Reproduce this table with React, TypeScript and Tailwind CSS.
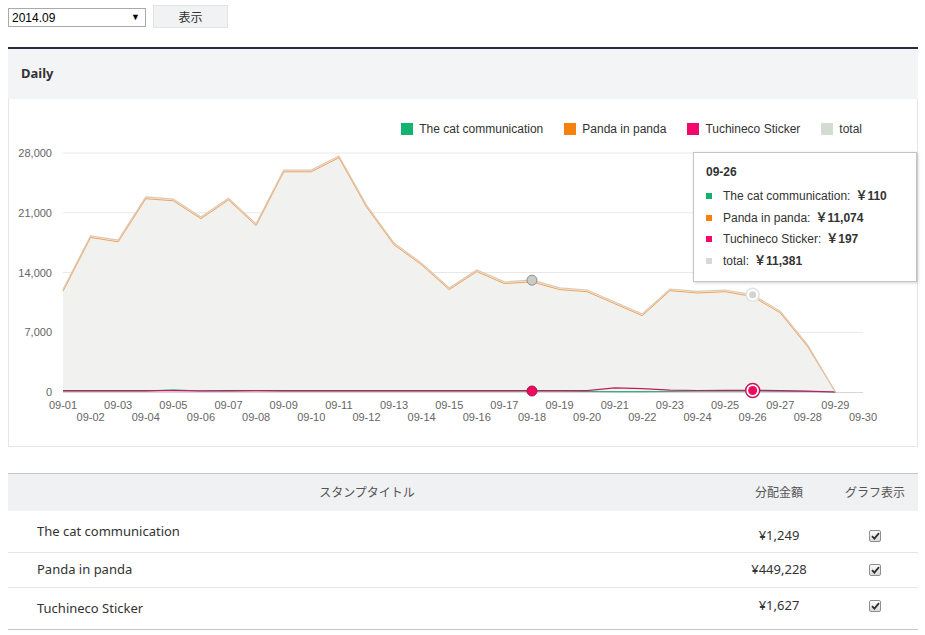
import React from "react";

const total = [
  12000, 18300, 17800, 22850, 22600, 20500, 22700, 19700, 26000, 26000, 27650, 21900, 17450, 15100, 12200,
  14300, 12900, 13100, 12200, 11950, 10540, 9140, 12070, 11800, 11950, 11381, 9480, 5500, 0,
];
const pink = [
  150, 150, 160, 150, 150, 140, 150, 150, 150, 150, 150, 160, 150, 150, 150, 150, 150, 150, 150, 160, 480, 400,
  220, 180, 200, 197, 150, 100, 0,
];
const green = [
  100, 100, 100, 100, 260, 120, 100, 150, 110, 100, 100, 100, 100, 100, 100, 100, 100, 100, 100, 60, 40, 40, 60,
  100, 100, 110, 100, 60, 0,
];
const panda = total.map((v, i) => (i === total.length - 1 ? 0 : Math.max(0, v - 200)));

const X0 = 63;
const STEP = 800 / 29;
const Y0 = 393;
const sx = (i: number) => X0 + i * STEP;
const sy = (v: number) => Y0 - (v * 239) / 28000;
const line = (d: number[]) => d.map((v, i) => `${i ? "L" : "M"}${sx(i).toFixed(1)},${sy(v).toFixed(1)}`).join(" ");

const yTicks = [0, 7000, 14000, 21000, 28000];
const days = Array.from({ length: 30 }, (_, i) => `09-${String(i + 1).padStart(2, "0")}`);

const legend = [
  { label: "The cat communication", color: "bg-[#13b26f]" },
  { label: "Panda in panda", color: "bg-[#f7810f]" },
  { label: "Tuchineco Sticker", color: "bg-[#f2086a]" },
  { label: "total", color: "bg-[#d2dcd2]" },
];

const tips = [
  { label: "The cat communication:", value: "￥110", color: "bg-[#13b26f]" },
  { label: "Panda in panda:", value: "￥11,074", color: "bg-[#f7810f]" },
  { label: "Tuchineco Sticker:", value: "￥197", color: "bg-[#f2086a]" },
  { label: "total:", value: "￥11,381", color: "bg-[#d6dad6]" },
];

const rows = [
  { title: "The cat communication", amount: "¥1,249", h: "h-[42px]", shift: "pt-[8px]" },
  { title: "Panda in panda", amount: "¥449,228", h: "h-[35px]", shift: "pt-0" },
  { title: "Tuchineco Sticker", amount: "¥1,627", h: "h-[41px]", shift: "pb-[6px]" },
];

function Check() {
  return (
    <span className="flex h-[12px] w-[12px] items-center justify-center rounded-[2px] border border-[#8e8e8e] bg-gradient-to-b from-[#fdfdfd] to-[#d9d9d9]">
      <svg width="9" height="8" viewBox="0 0 9 8">
        <path d="M1 4.2 L3.4 6.6 L8 1.2" fill="none" stroke="#2f2f2f" strokeWidth="1.8" />
      </svg>
    </span>
  );
}

function Chart() {
  const area = `${line(total)} L${sx(28).toFixed(1)},${Y0} L${X0},${Y0} Z`;
  return (
    <svg width="908" height="290" viewBox="9 140 908 290" className="block">
      {yTicks.slice(1).map((t) => (
        <line key={t} x1={X0} x2={863} y1={sy(t)} y2={sy(t)} stroke="#e8e8e8" strokeWidth="1" />
      ))}
      <path d={area} fill="#f1f2f0" />
      <line x1={X0} x2={863} y1={Y0 + 0.5} y2={Y0 + 0.5} stroke="#d6d6d6" strokeWidth="1" />
      <path d={line(green)} fill="none" stroke="#2fb585" strokeWidth="1.2" />
      <path d={line(pink)} fill="none" stroke="#c8185e" strokeWidth="1.2" />
      <path d={line(panda)} fill="none" stroke="#f4a057" strokeWidth="1" />
      <path d={line(total)} fill="none" stroke="#dcc8b2" strokeWidth="1.2" />
      {yTicks.map((t) => (
        <text
          key={t}
          x={52}
          y={sy(t) + 4}
          textAnchor="end"
          fontSize="11"
          fill="#666"
          fontFamily="'Liberation Sans', Arial, sans-serif"
        >
          {t.toLocaleString("en-US")}
        </text>
      ))}
      {days.map((d, i) => (
        <text
          key={d}
          x={sx(i)}
          y={i % 2 === 0 ? 409.5 : 422}
          textAnchor="middle"
          fontSize="11"
          fill="#666"
          fontFamily="'Liberation Sans', Arial, sans-serif"
        >
          {d}
        </text>
      ))}
      <circle cx={sx(17)} cy={sy(13100)} r="5" fill="#c9cdc5" stroke="#8c8c8c" strokeWidth="1" />
      <circle cx={sx(17)} cy={392} r="5" fill="#ee0a5f" stroke="#a8164e" strokeWidth="1" />
      <circle cx={sx(25)} cy={sy(11381)} r="6.5" fill="#fff" stroke="#e2e2e2" strokeWidth="1.5" />
      <circle cx={sx(25)} cy={sy(11381)} r="3.5" fill="#cfd5cf" />
      <circle cx={sx(25)} cy={391.5} r="7" fill="#fff" stroke="#c2185b" strokeWidth="1.5" />
      <circle cx={sx(25)} cy={391.5} r="4.5" fill="#ef0a5e" />
    </svg>
  );
}

export default function App() {
  return (
    <div className="min-h-[635px] w-[925px] bg-white pl-2 pt-[5px] font-['Liberation_Sans',Arial,sans-serif] text-[#333]">
      <div className="flex items-start gap-[7px]">
        <div className="mt-[3px] flex h-[19px] w-[138px] items-center justify-between border border-[#a9a9a9] bg-white pl-[3px] pr-[5px] text-[12px] text-black">
          <span>2014.09</span>
          <span className="text-[9px]">▼</span>
        </div>
        <button className="h-[23px] w-[75px] border border-[#e1e3e6] bg-[#f1f2f4] font-['Noto_Sans_CJK_JP',sans-serif] text-[12px] text-[#333]">
          表示
        </button>
      </div>

      <div className="mt-[19px] w-[910px]">
        <div className="flex h-[52px] items-center border-t-2 border-[#2a2b3c] bg-[#f3f4f6] pl-[13px] font-['Noto_Sans','Noto_Sans_CJK_JP',sans-serif] text-[13px] font-bold text-[#333]">
          Daily
        </div>
        <div className="relative h-[348px] border-x border-b border-[#e6e6e6] bg-white pt-[23px]">
          <div className="flex h-[14px] items-center justify-end gap-[21px] pr-[55px] text-[12px] text-[#333]">
            {legend.map((l) => (
              <div key={l.label} className="flex items-center gap-[6px]">
                <span className={`h-[12px] w-[12px] ${l.color}`} />
                <span>{l.label}</span>
              </div>
            ))}
          </div>
          <div className="mt-[3px]">
            <Chart />
          </div>
          <div className="absolute left-[684px] top-[53px] h-[130px] w-[224px] border border-[#c4c4c4] bg-white pl-[12px] pt-[12px] text-[12px] text-[#333] shadow-[1px_1px_3px_rgba(0,0,0,0.18)]">
            <div className="h-[14px] font-bold leading-[14px]">09-26</div>
            <div className="mt-[6px] flex flex-col">
              {tips.map((t) => (
                <div key={t.label} className="flex h-[21.7px] items-center">
                  <span className={`h-[6px] w-[6px] ${t.color}`} />
                  <span className="ml-[11px]">{t.label}</span>
                  <span className="ml-[5px] font-['Liberation_Sans','Noto_Sans_CJK_JP',sans-serif] font-bold">
                    {t.value}
                  </span>
                </div>
              ))}
            </div>
          </div>
        </div>

        <div className="mt-[26px] border-t border-b border-[#c6c6c6] font-['Noto_Sans','Noto_Sans_CJK_JP',sans-serif]">
          <div className="flex h-[37px] items-center bg-[#f0f1f3] text-[12px] text-[#555]">
            <div className="w-[718px] text-center">スタンプタイトル</div>
            <div className="w-[106px] text-center">分配金額</div>
            <div className="w-[86px] text-center">グラフ表示</div>
          </div>
          {rows.map((r, i) => (
            <div
              key={r.title}
              className={`flex items-center text-[13px] text-[#333] ${r.h} ${i < rows.length - 1 ? "border-b border-[#e6e6e6]" : ""}`}
            >
              <div className="w-[718px] pl-[29px]">{r.title}</div>
              <div className={`w-[106px] text-center ${r.shift}`}>{r.amount}</div>
              <div className={`flex w-[86px] justify-center ${r.shift}`}>
                <Check />
              </div>
            </div>
          ))}
        </div>
      </div>
    </div>
  );
}
